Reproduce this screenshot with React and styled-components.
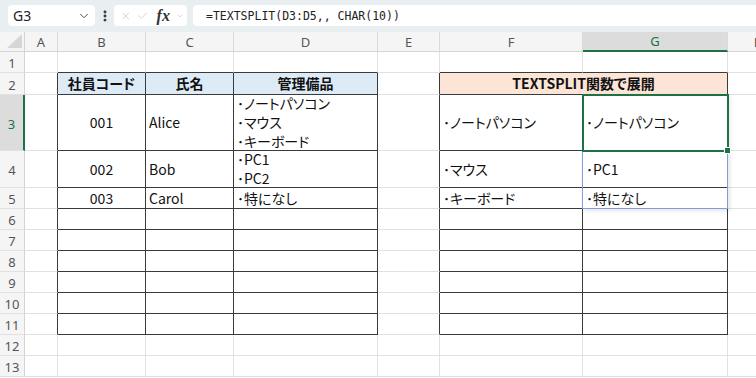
import styled, { createGlobalStyle } from 'styled-components'
import { ChevronDown, X, Check, EllipsisVertical } from 'lucide-react'

// column widths: row header, A..H
const COLS = [25, 33, 88, 88, 144, 62, 143, 145, 62]
// header row + sheet rows 1..13
const ROWS = [20, 21, 22, 56, 37, 21, 21, 21, 21, 21, 21, 21, 21, 21]
const LETTERS = ['A', 'B', 'C', 'D', 'E', 'F', 'G', 'H']
const ROW_COUNT = 13

const GRID = '#e1e1e1'
const INK = '#3a3a3a'
const GREEN = '#1e7145'
const BLUE = '#ddebf7'
const PEACH = '#fce4d6'

const ACTIVE = { row: 3, col: 7 }

const DATA = {
  B2: { lines: ['社員コード'], bold: true, center: true, fill: BLUE },
  C2: { lines: ['氏名'], bold: true, center: true, fill: BLUE },
  D2: { lines: ['管理備品'], bold: true, center: true, fill: BLUE },
  F2: { lines: ['TEXTSPLIT関数で展開'], bold: true, center: true, fill: PEACH, span: 2 },
  B3: { lines: ['001'], center: true },
  C3: { lines: ['Alice'] },
  D3: { lines: ['･ノートパソコン', '･マウス', '･キーボード'] },
  F3: { lines: ['･ノートパソコン'] },
  G3: { lines: ['･ノートパソコン'] },
  B4: { lines: ['002'], center: true },
  C4: { lines: ['Bob'] },
  D4: { lines: ['･PC1', '･PC2'] },
  F4: { lines: ['･マウス'] },
  G4: { lines: ['･PC1'] },
  B5: { lines: ['003'], center: true },
  C5: { lines: ['Carol'] },
  D5: { lines: ['･特になし'] },
  F5: { lines: ['･キーボード'] },
  G5: { lines: ['･特になし'] },
}
const MERGED = ['G2']

const inTable = (r, c) =>
  r >= 2 && r <= 11 && ((c >= 2 && c <= 4) || (c >= 6 && c <= 7))

const GlobalStyle = createGlobalStyle`
  html, body {
    margin: 0;
    padding: 0;
    background: #fff;
    overflow: hidden;
  }
  body {
    font-family: "Noto Sans CJK JP", "Noto Sans", sans-serif;
  }
`

const Window = styled.div`
  width: 756px;
  height: 378px;
  overflow: hidden;
  display: flex;
  flex-direction: column;
  background: #fff;
`

const FormulaBar = styled.div`
  box-sizing: border-box;
  display: flex;
  align-items: stretch;
  height: 32px;
  padding: 5px 0 6px 8px;
  background: #e9eef1;
`

const NameBox = styled.div`
  box-sizing: border-box;
  width: 87px;
  display: flex;
  align-items: center;
  justify-content: space-between;
  padding: 0 4px 0 5px;
  background: #fff;
  border-radius: 4px;
  font-family: "Noto Sans", sans-serif;
  font-size: 14px;
  color: #222;
`

const Grip = styled.div`
  width: 19px;
  display: flex;
  align-items: center;
  justify-content: center;
  color: #333;
`

const FxBox = styled.div`
  box-sizing: border-box;
  width: 73px;
  display: flex;
  align-items: center;
  gap: 6px;
  padding: 0 3px 0 6px;
  background: #fff;
  border-radius: 4px;
  color: #b5b5b5;
`

const FxLabel = styled.span`
  font-family: "Liberation Serif", serif;
  font-style: italic;
  font-weight: 700;
  font-size: 16px;
  color: #333;
  margin-left: 2px;
`

const FormulaInput = styled.div`
  flex: 1;
  margin: 0 -6px 0 6px;
  display: flex;
  align-items: center;
  padding-left: 13px;
  background: #fff;
  border-radius: 4px;
  font-family: "DejaVu Sans Mono", monospace;
  font-size: 11.5px;
  color: #222;
`

const Sheet = styled.div`
  display: grid;
  grid-template-columns: ${COLS.map((w) => `${w}px`).join(' ')};
  grid-template-rows: ${ROWS.map((h) => `${h}px`).join(' ')};
`

const Corner = styled.div`
  grid-row: 1;
  grid-column: 1;
  position: relative;
  background: #f5f5f5;
  border-right: 1px solid #d4d4d4;
  border-bottom: 1px solid #d4d4d4;

  &::after {
    content: '';
    position: absolute;
    right: 2px;
    bottom: 3px;
    width: 15px;
    height: 14px;
    background: #d6d6d6;
    clip-path: polygon(100% 0, 100% 100%, 0 100%);
  }
`

const Heading = styled.div`
  box-sizing: border-box;
  display: flex;
  align-items: center;
  justify-content: center;
  font-family: "Noto Sans", sans-serif;
  font-size: 13px;
  background: ${(p) => (p.$active ? '#dcdcdc' : '#f5f5f5')};
  color: ${(p) => (p.$active ? GREEN : '#555')};
`

const ColHead = styled(Heading)`
  grid-row: 1;
  grid-column: ${(p) => p.$col};
  border-right: 1px solid #dadada;
  border-bottom: ${(p) => (p.$active ? `2px solid ${GREEN}` : '1px solid #d4d4d4')};
`

const RowHead = styled(Heading)`
  grid-row: ${(p) => p.$row};
  grid-column: 1;
  padding-top: 2px;
  border-bottom: 1px solid ${GRID};
  border-right: ${(p) => (p.$active ? `2px solid ${GREEN}` : '1px solid #d4d4d4')};
`

const Cell = styled.div`
  grid-row: ${(p) => p.$row};
  grid-column: ${(p) => p.$col} / span ${(p) => p.$span || 1};
  box-sizing: border-box;
  min-width: 0;
  display: flex;
  flex-direction: column;
  justify-content: center;
  align-items: ${(p) => (p.$center ? 'center' : 'flex-start')};
  padding: 0 3px;
  background: ${(p) => p.$fill || '#fff'};
  border-right: 1px solid ${(p) => (p.$darkRight ? INK : GRID)};
  border-bottom: 1px solid ${(p) => (p.$darkBottom ? INK : GRID)};
  font-size: 14px;
  line-height: 19px;
  font-weight: ${(p) => (p.$bold ? 700 : 400)};
  font-feature-settings: "palt" 1;
  color: #111;
  white-space: nowrap;
`

const SpillRange = styled.div`
  grid-row: ${ACTIVE.row + 1} / span 3;
  grid-column: ${ACTIVE.col + 1};
  margin: -1px 0 0 -1px;
  border: 1px solid #7f9fdc;
  box-shadow: 2px 2px 4px rgba(0, 0, 0, 0.1);
  pointer-events: none;
`

const Selection = styled.div`
  grid-row: ${ACTIVE.row + 1};
  grid-column: ${ACTIVE.col + 1};
  position: relative;
  margin: -1px -1px -1px -1px;
  border: 2px solid ${GREEN};
  pointer-events: none;
`

const FillHandle = styled.span`
  position: absolute;
  right: -4px;
  bottom: -4px;
  width: 5px;
  height: 5px;
  background: ${GREEN};
  border: 1px solid #fff;
`

function App() {
  const cells = []
  for (let r = 1; r <= ROW_COUNT; r++) {
    for (let c = 1; c <= LETTERS.length; c++) {
      const key = `${LETTERS[c - 1]}${r}`
      if (MERGED.includes(key)) continue
      const d = DATA[key] || {}
      const span = d.span || 1
      const lastCol = c + span - 1
      cells.push(
        <Cell
          key={key}
          $row={r + 1}
          $col={c + 1}
          $span={span}
          $center={d.center}
          $bold={d.bold}
          $fill={d.fill}
          $darkRight={inTable(r, lastCol) || inTable(r, lastCol + 1)}
          $darkBottom={inTable(r, c) || inTable(r + 1, c)}
        >
          {(d.lines || []).map((line, i) => (
            <span key={i}>{line}</span>
          ))}
        </Cell>
      )
    }
  }

  return (
    <Window>
      <GlobalStyle />
      <FormulaBar>
        <NameBox>
          <span>G3</span>
          <ChevronDown size={14} strokeWidth={1.6} color="#444" />
        </NameBox>
        <Grip>
          <EllipsisVertical size={14} strokeWidth={3} />
        </Grip>
        <FxBox>
          <X size={14} strokeWidth={1.3} />
          <Check size={14} strokeWidth={1.3} />
          <FxLabel>fx</FxLabel>
          <ChevronDown size={10} strokeWidth={1.5} />
        </FxBox>
        <FormulaInput>=TEXTSPLIT(D3:D5,, CHAR(10))</FormulaInput>
      </FormulaBar>

      <Sheet>
        <Corner />
        {LETTERS.map((l, i) => (
          <ColHead key={l} $col={i + 2} $active={i + 1 === ACTIVE.col}>
            {l}
          </ColHead>
        ))}
        {Array.from({ length: ROW_COUNT }, (_, i) => (
          <RowHead key={i} $row={i + 2} $active={i + 1 === ACTIVE.row}>
            {i + 1}
          </RowHead>
        ))}
        {cells}
        <SpillRange />
        <Selection>
          <FillHandle />
        </Selection>
      </Sheet>
    </Window>
  )
}

export default App
